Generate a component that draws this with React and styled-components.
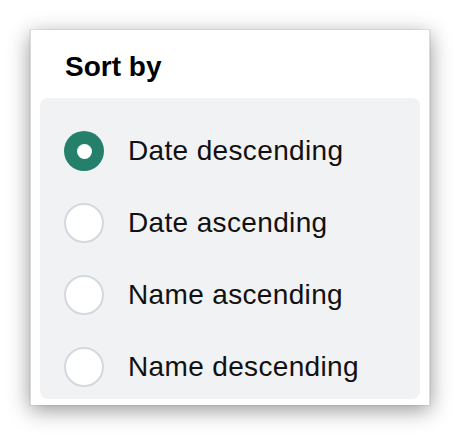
import React, { useState } from "react";
import styled, { createGlobalStyle } from "styled-components";

const Global = createGlobalStyle`
  html, body { margin: 0; padding: 0; background: #ffffff; }
  body { font-family: "Liberation Sans", Arial, sans-serif; }
`;

const Page = styled.div`
  padding: 30px;
  width: 460px;
  height: 436px;
  box-sizing: border-box;
`;

const Card = styled.div`
  width: 400px;
  height: 375px;
  box-sizing: border-box;
  background: #ffffff;
  padding: 0 10px 6px;
  display: flex;
  flex-direction: column;
  box-shadow: inset 1px 0 0 #dcdce0, inset -1px 0 0 #dcdce0,
    0 0 0 1px rgba(0, 0, 0, 0.05), 0 5px 20px rgba(0, 0, 0, 0.42);
  overflow: hidden;
`;

const Title = styled.h2`
  margin: 0;
  padding: 21px 0 15px 25px;
  font-size: 28px;
  line-height: 32px;
  font-weight: 700;
  color: #000;
`;

const Panel = styled.div`
  flex: 1;
  background: #f1f2f4;
  border-radius: 8px;
  padding: 21px 0 0;
  display: flex;
  flex-direction: column;
  gap: 8px;
  overflow: hidden;
`;

const Row = styled.label`
  height: 64px;
  display: flex;
  align-items: center;
  gap: 24px;
  padding-left: 24px;
  cursor: pointer;
  font-size: 28px;
  letter-spacing: 0.35px;
  color: #111;
`;

const Radio = styled.span`
  width: 40px;
  height: 40px;
  flex: none;
  box-sizing: border-box;
  border-radius: 50%;
  display: flex;
  align-items: center;
  justify-content: center;
  background: ${(p) => (p.$checked ? "#24806b" : "#ffffff")};
  border: ${(p) => (p.$checked ? "none" : "2px solid #d4d8de")};
  &::after {
    content: "";
    display: ${(p) => (p.$checked ? "block" : "none")};
    width: 15px;
    height: 15px;
    border-radius: 50%;
    background: #ffffff;
  }
`;

const options = ["Date descending", "Date ascending", "Name ascending", "Name descending"];

export default function App() {
  const [sel, setSel] = useState(0);
  return (
    <>
      <Global />
      <Page>
        <Card>
          <Title>Sort by</Title>
          <Panel>
            {options.map((o, i) => (
              <Row key={o} onClick={() => setSel(i)}>
                <Radio $checked={sel === i} />
                {o}
              </Row>
            ))}
          </Panel>
        </Card>
      </Page>
    </>
  );
}
